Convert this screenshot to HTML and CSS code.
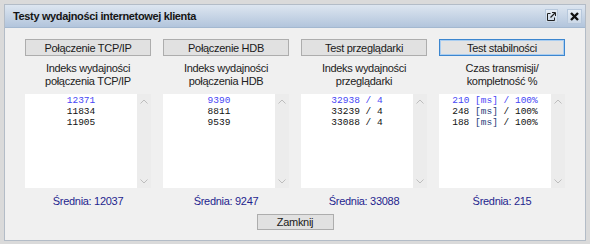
FILE: index.html
```html
<!DOCTYPE html>
<html>
<head>
	<meta charset="utf-8">
	<meta name="viewport" content="width=device-width, initial-scale=1">
	<title>Testy wydajności internetowej klienta</title>
	<link rel="stylesheet" href="styles.css">
</head>

<body>
	<div class="window">
		<div class="titlebar">
			<span class="title">Testy wydajności internetowej klienta</span>
			<span class="tbtn popout">
				<svg width="9" height="9" viewBox="0 0 9 9">
					<path d="M3.5 1.5 H0.5 V8.5 H7.5 V5.5" fill="none" stroke="#222" stroke-width="1"/>
					<path d="M3.5 5.5 L8 1" fill="none" stroke="#222" stroke-width="1.2"/>
					<path d="M5 0.5 H8.5 V4" fill="none" stroke="#222" stroke-width="1"/>
				</svg>
			</span>
			<span class="tbtn close">
				<svg width="9" height="9" viewBox="0 0 9 9">
					<path d="M1 1 L8 8 M8 1 L1 8" stroke="#111" stroke-width="2.4"/>
				</svg>
			</span>
		</div>

		<div class="content">
			<div class="columns">
				<div class="col">
					<button class="btn">Połączenie TCP/IP</button>
					<p class="label">Indeks wydajności<br>połączenia TCP/IP</p>
					<div class="list">
						<div class="box">
							<div class="row first">12371</div>
							<div class="row">11834</div>
							<div class="row">11905</div>
						</div>
						<div class="scroll">
							<svg width="8" height="5" viewBox="0 0 8 5"><path d="M0.5 4.5 L4 1 L7.5 4.5" fill="none" stroke="#bdbdbd"/></svg>
							<svg width="8" height="5" viewBox="0 0 8 5"><path d="M0.5 0.5 L4 4 L7.5 0.5" fill="none" stroke="#bdbdbd"/></svg>
						</div>
					</div>
					<p class="avg">Średnia: 12037</p>
				</div>

				<div class="col">
					<button class="btn">Połączenie HDB</button>
					<p class="label">Indeks wydajności<br>połączenia HDB</p>
					<div class="list">
						<div class="box">
							<div class="row first">9390</div>
							<div class="row">8811</div>
							<div class="row">9539</div>
						</div>
						<div class="scroll">
							<svg width="8" height="5" viewBox="0 0 8 5"><path d="M0.5 4.5 L4 1 L7.5 4.5" fill="none" stroke="#bdbdbd"/></svg>
							<svg width="8" height="5" viewBox="0 0 8 5"><path d="M0.5 0.5 L4 4 L7.5 0.5" fill="none" stroke="#bdbdbd"/></svg>
						</div>
					</div>
					<p class="avg">Średnia: 9247</p>
				</div>

				<div class="col">
					<button class="btn">Test przeglądarki</button>
					<p class="label">Indeks wydajności<br>przeglądarki</p>
					<div class="list">
						<div class="box">
							<div class="row first">32938 / 4</div>
							<div class="row">33239 / 4</div>
							<div class="row">33088 / 4</div>
						</div>
						<div class="scroll">
							<svg width="8" height="5" viewBox="0 0 8 5"><path d="M0.5 4.5 L4 1 L7.5 4.5" fill="none" stroke="#bdbdbd"/></svg>
							<svg width="8" height="5" viewBox="0 0 8 5"><path d="M0.5 0.5 L4 4 L7.5 0.5" fill="none" stroke="#bdbdbd"/></svg>
						</div>
					</div>
					<p class="avg">Średnia: 33088</p>
				</div>

				<div class="col">
					<button class="btn focused">Test stabilności</button>
					<p class="label">Czas transmisji/<br>kompletność %</p>
					<div class="list">
						<div class="box">
							<div class="row first">210 [ms] / 100%</div>
							<div class="row">248 <span class="unit">[ms]</span> / 100%</div>
							<div class="row">188 <span class="unit">[ms]</span> / 100%</div>
						</div>
						<div class="scroll">
							<svg width="8" height="5" viewBox="0 0 8 5"><path d="M0.5 4.5 L4 1 L7.5 4.5" fill="none" stroke="#bdbdbd"/></svg>
							<svg width="8" height="5" viewBox="0 0 8 5"><path d="M0.5 0.5 L4 4 L7.5 0.5" fill="none" stroke="#bdbdbd"/></svg>
						</div>
					</div>
					<p class="avg">Średnia: 215</p>
				</div>
			</div>

			<div class="footer">
				<button class="btn closebtn">Zamknij</button>
			</div>
		</div>
	</div>
</body>
</html>
```

FILE: styles.css
```css
body {
	margin: 0;
	padding: 4px;
	background: #dadada;
	font-family: "Liberation Sans", Arial, sans-serif;
	font-size: 11px;
	color: #1e1e1e;}
.window {
	width: 580px;
	height: 235px;
	border: 1px solid #b3bcc7;
	background: #f0f0f0;
	display: flex;
	flex-direction: column;}
.titlebar {
	height: 22px;
	border-bottom: 1px solid #a3b8d0;
	background: linear-gradient(#dde6f0, #b2c5dc);
	display: flex;
	align-items: center;
	padding: 0 3px 0 8px;}
.title {
	flex: 1;
	font-weight: bold;
	letter-spacing: -0.35px;
	color: #151515;}
.tbtn {
	width: 15px;
	height: 15px;
	box-sizing: border-box;
	display: flex;
	align-items: center;
	justify-content: center;
	background: linear-gradient(#e6edf5, #cbd8e7);
	border: 1px solid #b7c8dc;}
.popout {
	margin-right: 9px;
	width: 13px;
	height: 14px;}

.content {
	flex: 1;
	padding: 11px 20px 0 20px;
	display: flex;
	flex-direction: column;}
.columns {
	display: flex;
	gap: 12px;}
.col {
	width: 126px;
	display: flex;
	flex-direction: column;
	align-items: center;}
.btn {
	height: 17px;
	padding: 0;
	border: 1px solid #adadad;
	background: #e1e1e1;
	font-family: "Liberation Sans", Arial, sans-serif;
	font-size: 11px;
	letter-spacing: -0.3px;
	color: #1a1a1a;}
.col .btn {
	width: 100%;}
.focused {
	border-color: #3c86cf;
	box-shadow: inset 0 0 0 1px #a9cdf0;
	background: #e3e3e3;}
.label {
	margin: 6px 0 0 0;
	height: 26px;
	line-height: 13px;
	text-align: center;
	letter-spacing: -0.3px;
	color: #222;}
.list {
	margin-top: 6px;
	width: 100%;
	height: 94px;
	display: flex;}
.box {
	flex: 1;
	min-width: 0;
	background: #fff;
	padding-top: 1px;
	font-family: "Liberation Mono", "Courier New", monospace;
	font-size: 9.5px;
	line-height: 11px;
	text-align: center;
	color: #111;}
.row {
	white-space: pre;}
.row.first {
	color: #4646f5;}
.unit {
	color: #26407a;}
.scroll {
	width: 14px;
	background: #ececec;
	display: flex;
	flex-direction: column;
	justify-content: space-between;
	align-items: center;
	padding: 5px 0 4px 0;
	box-sizing: border-box;}
.avg {
	margin: 7px 0 0 0;
	line-height: 13px;
	letter-spacing: -0.3px;
	color: #1f1f8e;}
.footer {
	display: flex;
	justify-content: center;
	margin-top: 6px;}
.closebtn {
	width: 77px;
	height: 16px;}
```
